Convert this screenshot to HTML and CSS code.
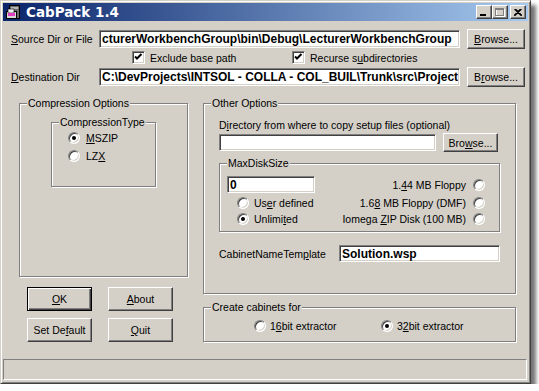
FILE: index.html
```html
<!DOCTYPE html>
<html lang="en">
<head>
    <meta charset="UTF-8">
    <title>CabPack 1.4</title>
    <link rel="stylesheet" href="styles.css">
</head>
<body>

    <div class="window">
        <!-- title bar -->
        <div class="titlebar">
            <svg class="app-icon" width="16" height="16" viewBox="0 0 16 16">
                <rect x="4.5" y="1.5" width="10" height="13" fill="#6b6b6b" stroke="#000"/>
                <rect x="6" y="3" width="7" height="2" fill="#b8b8b8"/>
                <rect x="1.5" y="7.5" width="10" height="7" fill="#d8d8d8" stroke="#000"/>
                <rect x="3" y="5" width="6" height="4" fill="#f0f0f0" stroke="#000" stroke-width="0.6"/>
                <rect x="3" y="9" width="7" height="3" fill="#e040c0"/>
            </svg>
            <span class="title">CabPack 1.4</span>
            <span class="caption-btn">
                <svg width="8" height="7" viewBox="0 0 8 7"><rect x="0" y="5" width="6" height="2" fill="#000"/></svg>
            </span>
            <span class="caption-btn">
                <svg width="10" height="9" viewBox="0 0 10 9">
                    <rect x="1.5" y="1.5" width="8" height="7" fill="none" stroke="#fff"/>
                    <rect x="0.5" y="0.5" width="8" height="7" fill="none" stroke="#808080"/>
                    <rect x="0" y="1" width="9" height="1" fill="#808080"/>
                </svg>
            </span>
            <span class="caption-btn close">
                <svg width="8" height="7" viewBox="0 0 8 7">
                    <path d="M0.5 0 L7.5 7 M1.5 0 L8 6.5 M7.5 0 L0.5 7 M6.5 0 L0 6.5" stroke="#000" stroke-width="1.1"/>
                </svg>
            </span>
        </div>

        <div class="content">
            <div class="row">
                <span class="label"><u>S</u>ource Dir or File</span>
                <input class="field path" type="text" value="cturerWorkbenchGroup\bin\Debug\LecturerWorkbenchGroup">
                <button class="btn browse"><u>B</u>rowse...</button>
            </div>

            <div class="checks">
                <span class="check first">
                    <span class="checkbox">
                        <svg width="9" height="9" viewBox="0 0 9 9"><path d="M1 3.5 L3 5.5 L7.5 1" fill="none" stroke="#000" stroke-width="2"/></svg>
                    </span>
                    <span>Exclude base path</span>
                </span>
                <span class="check">
                    <span class="checkbox">
                        <svg width="9" height="9" viewBox="0 0 9 9"><path d="M1 3.5 L3 5.5 L7.5 1" fill="none" stroke="#000" stroke-width="2"/></svg>
                    </span>
                    <span>Recurse s<u>u</u>bdirectories</span>
                </span>
            </div>

            <div class="row second">
                <span class="label"><u>D</u>estination Dir</span>
                <input class="field path" type="text" value="C:\DevProjects\INTSOL - COLLA - COL_BUIL\Trunk\src\Projects">
                <button class="btn browse">B<u>r</u>owse...</button>
            </div>

            <div class="main">
                <div class="left-col">
                    <fieldset class="group compression">
                        <legend>Compression Options</legend>
                        <div class="compression-body">
                            <fieldset class="group comp-type">
                                <legend>CompressionType</legend>
                                <div class="comp-type-body">
                                    <div class="option"><span class="radio on"></span><span><u>M</u>SZIP</span></div>
                                    <div class="option"><span class="radio"></span><span>LZ<u>X</u></span></div>
                                </div>
                            </fieldset>
                        </div>
                    </fieldset>

                    <div class="buttons">
                        <button class="btn default"><u>O</u>K</button>
                        <button class="btn"><u>A</u>bout</button>
                        <button class="btn">Set De<u>f</u>ault</button>
                        <button class="btn"><u>Q</u>uit</button>
                    </div>
                </div>

                <div class="right-col">
                    <fieldset class="group other">
                        <legend>Other Options</legend>
                        <div class="other-body">
                            <div class="dir-label">D<u>i</u>rectory from where to copy setup files (optional)</div>
                            <div class="dir-row">
                                <input class="field setup-dir" type="text" value="">
                                <button class="btn small-browse">Bro<u>w</u>se...</button>
                            </div>

                            <fieldset class="group disk">
                                <legend>MaxDiskSize</legend>
                                <div class="disk-body">
                                    <div class="disk-row">
                                        <input class="field disk-size" type="text" value="0">
                                        <span class="option right"><span>1.<u>4</u>4 MB Floppy</span><span class="radio"></span></span>
                                    </div>
                                    <div class="disk-row gap">
                                        <span class="option indent"><span class="radio"></span><span>Us<u>e</u>r defined</span></span>
                                        <span class="option right"><span>1.6<u>8</u> MB Floppy (DMF)</span><span class="radio"></span></span>
                                    </div>
                                    <div class="disk-row">
                                        <span class="option indent"><span class="radio on"></span><span>Unlimi<u>t</u>ed</span></span>
                                        <span class="option right"><span>Iomega <u>Z</u>IP Disk (100 MB)</span><span class="radio"></span></span>
                                    </div>
                                </div>
                            </fieldset>

                            <div class="template-row">
                                <span class="template-label">CabinetNameTem<u>p</u>late</span>
                                <input class="field template" type="text" value="Solution.wsp">
                            </div>
                        </div>
                    </fieldset>

                    <fieldset class="group cabinets">
                        <legend>Create cabinets for</legend>
                        <div class="cabinets-body">
                            <span class="option bit16"><span class="radio"></span><span>1<u>6</u>bit extractor</span></span>
                            <span class="option"><span class="radio on"></span><span>3<u>2</u>bit extractor</span></span>
                        </div>
                    </fieldset>
                </div>
            </div>
        </div>

        <div class="statusbar"></div>
    </div>

</body>
</html>
```

FILE: styles.css
```css
* {
    box-sizing: border-box;
}
body {
    margin: 0;
    background: #fff;
    font-family: "Liberation Sans", Arial, sans-serif;
    font-size: 10.5px;
    color: #000;
}
u {
    text-decoration-thickness: 1px;
    text-underline-offset: 1px;
}
.window {
    width: 531px;
    height: 384px;
    background: #d4d0c8;
    border: 1px solid;
    border-color: #d4d0c8 #404040 #404040 #d4d0c8;
    box-shadow: inset 1px 1px #fff, inset -1px -1px #808080, 5px 5px 4px rgba(0, 0, 0, 0.55);
    padding: 2px;
    display: flex;
    flex-direction: column;
}
.titlebar {
    height: 18px;
    display: flex;
    align-items: center;
    background: linear-gradient(90deg, #0a246a, #a6caf0);
    padding: 0 2px 0 2px;
}
.app-icon {
    margin-right: 5px;
}
.title {
    flex: 1;
    color: #fff;
    font-family: "DejaVu Sans", Verdana, sans-serif;
    font-weight: bold;
    font-size: 13.5px;
}
.caption-btn {
    width: 16px;
    height: 14px;
    background: #d4d0c8;
    border: 1px solid;
    border-color: #fff #404040 #404040 #fff;
    box-shadow: inset -1px -1px #808080;
    display: flex;
    align-items: center;
    justify-content: center;
}
.caption-btn.close {
    margin-left: 2px;
}
.content {
    flex: 1;
    padding: 8px 0 0 8px;
}
.row {
    display: flex;
    align-items: center;
    height: 20px;
}
.row.second {
    margin-top: 3px;
}
.label {
    width: 88px;
}
.field {
    font-family: inherit;
    font-size: 12px;
    font-weight: bold;
    color: #000;
    background: #fff;
    border: 1px solid;
    border-color: #808080 #fff #fff #808080;
    box-shadow: inset 1px 1px #404040, inset -1px -1px #d4d0c8;
    padding: 0 1px 0 2px;
    margin: 0;
    outline: none;
}
.path {
    width: 361px;
    height: 18px;
}
.btn {
    font-family: inherit;
    font-size: 10.5px;
    color: #000;
    background: #d4d0c8;
    border: 1px solid;
    border-color: #fff #404040 #404040 #fff;
    box-shadow: inset -1px -1px #808080;
    padding: 0;
    margin: 0;
}
.btn.default {
    border-color: #000;
    box-shadow: inset 1px 1px #fff, inset -1px -1px #404040, inset -2px -2px #808080;
}
.browse {
    width: 58px;
    height: 20px;
    margin-left: 7px;
}
.checks {
    display: flex;
    align-items: center;
    height: 13px;
    margin-top: 2px;
    padding-left: 121px;
}
.check {
    display: flex;
    align-items: center;
    gap: 5px;
}
.check.first {
    width: 160px;
}
.checkbox {
    width: 13px;
    height: 13px;
    background: #fff;
    border: 1px solid;
    border-color: #808080 #fff #fff #808080;
    box-shadow: inset 1px 1px #404040, inset -1px -1px #d4d0c8;
    display: flex;
    align-items: center;
    justify-content: center;
}
.radio {
    width: 12px;
    height: 12px;
    flex: none;
    border-radius: 50%;
    background: #fff;
    border: 1px solid;
    border-color: #808080 #fff #fff #808080;
    box-shadow: inset 1px 1px #404040, inset -1px -1px #d4d0c8;
    position: relative;
    display: inline-block;
}
.radio.on::after {
    content: "";
    position: absolute;
    left: 3px;
    top: 3px;
    width: 4px;
    height: 4px;
    border-radius: 50%;
    background: #000;
}
.main {
    display: flex;
    margin: 10px 0 0 8px;
}
.left-col {
    width: 169px;
}
.right-col {
    width: 313px;
    margin-left: 15px;
}

/* group boxes */
.group {
    margin: 0;
    padding: 0;
    min-width: 0;
    border: 1px solid #808080;
    box-shadow: inset 1px 1px #fff, 1px 1px #fff;
}
.group legend {
    margin-left: 7px;
    padding: 0 1px;
    line-height: 13px;
    background: #d4d0c8;
}
.compression {
    width: 169px;
    height: 180px;
}
.compression-body {
    padding: 6px 0 0 31px;
}
.comp-type {
    width: 105px;
    height: 71px;
}
.comp-type-body {
    padding-left: 16px;
}
.option {
    display: flex;
    align-items: center;
    gap: 6px;
    height: 18px;
}
.buttons {
    display: grid;
    grid-template-columns: 65px 65px;
    grid-auto-rows: 24px;
    gap: 7px 16px;
    margin: 10px 0 0 8px;
}
.other {
    width: 313px;
    height: 197px;
}
.other-body {
    padding: 9px 0 0 15px;
}
.dir-label {
    line-height: 13px;
}
.dir-row {
    display: flex;
    align-items: center;
    height: 19px;
    margin-top: 1px;
}
.setup-dir {
    width: 217px;
    height: 17px;
}
.small-browse {
    width: 55px;
    height: 19px;
    margin-left: 7px;
}
.disk {
    width: 281px;
    height: 75px;
    margin-top: 5px;
}
.disk-body {
    padding: 6px 14px 0 7px;
}
.disk-row {
    display: flex;
    align-items: center;
    justify-content: space-between;
    height: 16px;
}
.disk-row:first-child {
    height: 17px;
}
.disk-row.gap {
    margin-top: 2px;
}
.disk-size {
    width: 88px;
    height: 17px;
}
.option.right {
    gap: 7px;
    height: auto;
}
.option.indent {
    padding-left: 10px;
    gap: 5px;
    height: auto;
}
.template-row {
    display: flex;
    align-items: center;
    height: 17px;
    margin-top: 13px;
}
.template-label {
    width: 120px;
}
.template {
    width: 161px;
    height: 17px;
}
.cabinets {
    width: 313px;
    height: 41px;
    margin-top: 7px;
}
.cabinets-body {
    display: flex;
    padding: 6px 0 0 50px;
}
.cabinets-body .option {
    height: 12px;
    gap: 4px;
}
.option.bit16 {
    width: 127px;
}
.statusbar {
    height: 21px;
    margin: 0 1px 1px 0;
    border: 1px solid;
    border-color: #808080 #fff #fff #808080;
}
```
